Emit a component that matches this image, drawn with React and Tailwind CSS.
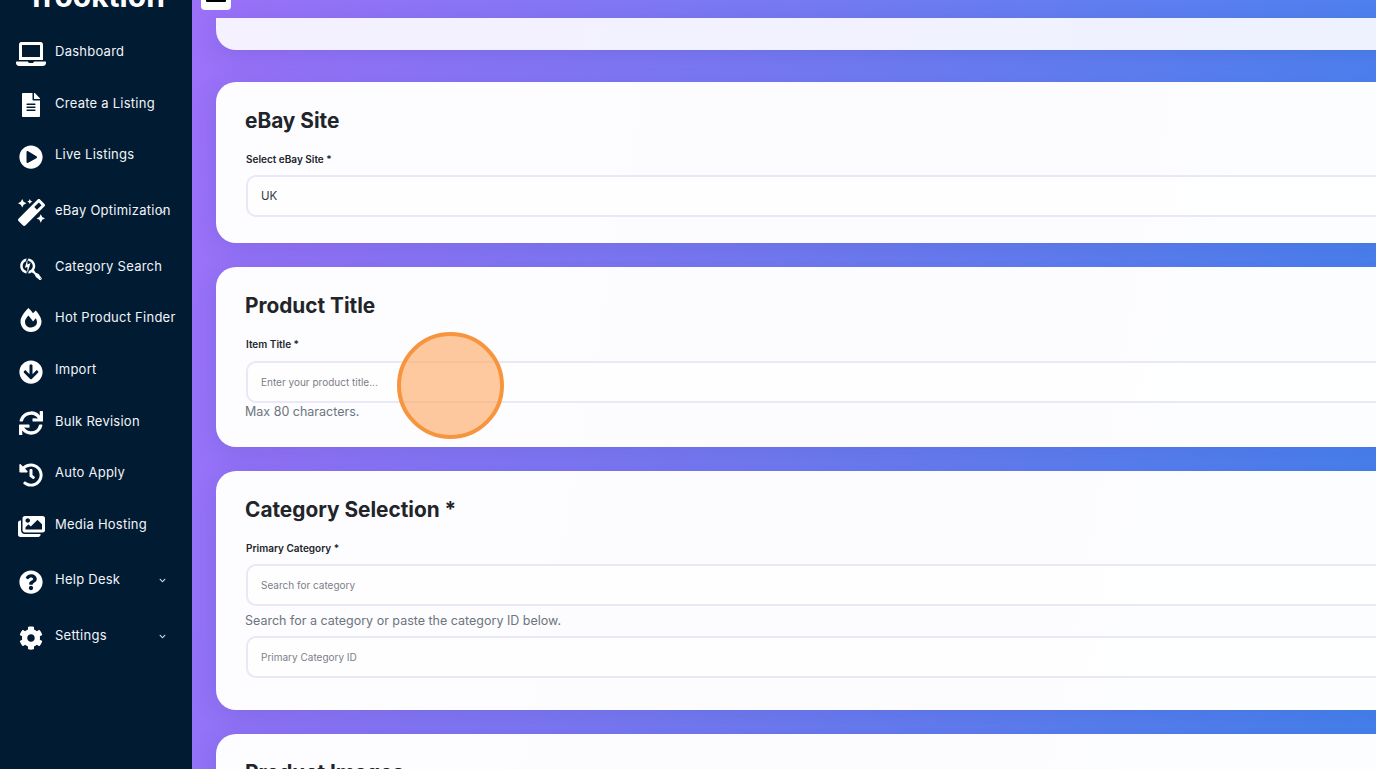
import React from "react";
import { FaLaptop, FaFileAlt, FaPlayCircle, FaMagic, FaSearchengin, FaFireAlt, FaArrowCircleDown, FaSync, FaHistory, FaImages, FaQuestionCircle, FaCog, FaChevronDown } from "react-icons/fa";

const items = [
  { label: "Dashboard", Icon: FaLaptop, h: "h-[51.6px]", size: "text-[30px]" },
  { label: "Create a Listing", Icon: FaFileAlt, h: "h-[51.6px]", size: "text-[24px]" },
  { label: "Live Listings", Icon: FaPlayCircle, h: "h-[51.6px]", size: "text-[24px]" },
  { label: "eBay Optimization", Icon: FaMagic, h: "h-[60px]", size: "text-[27px]", chevron: true },
  { label: "Category Search", Icon: FaSearchengin, h: "h-[51.6px]", size: "text-[24px]" },
  { label: "Hot Product Finder", Icon: FaFireAlt, h: "h-[51.6px]", size: "text-[24px]" },
  { label: "Import", Icon: FaArrowCircleDown, h: "h-[51.6px]", size: "text-[24px]" },
  { label: "Bulk Revision", Icon: FaSync, h: "h-[51.6px]", size: "text-[24px]" },
  { label: "Auto Apply", Icon: FaHistory, h: "h-[51.6px]", size: "text-[24px]" },
  { label: "Media Hosting", Icon: FaImages, h: "h-[51.6px]", size: "text-[27px]" },
  { label: "Help Desk", Icon: FaQuestionCircle, h: "h-[59px]", size: "text-[24px]", chevron: true },
  { label: "Settings", Icon: FaCog, h: "h-[53px]", size: "text-[24px]", chevron: true },
];

function NavItem({ label, Icon, h, size, chevron }) {
  return (
    <div className={`relative flex items-center pl-4 ${h}`}>
      <span className="flex w-[30px] justify-center text-white">
        <Icon className={size} />
      </span>
      <span className="ml-[9px] -translate-y-[2px] text-[13px] tracking-[0.25px] whitespace-nowrap text-[#f1f4f8]">{label}</span>
      {chevron && <FaChevronDown className="absolute left-[159px] top-1/2 -mt-[5px] text-[7px] text-[#d5dbe2]" />}
    </div>
  );
}

function Field({ label, value, placeholder, hint, labelGap = "mb-[8px]", hintClass = "mt-[0px]" }) {
  return (
    <div>
      {label && <div className={`${labelGap} h-[15px] text-[10px] leading-[15px] font-semibold text-[#212529]`}>{label}</div>}
      <input
        readOnly
        value={value || ""}
        placeholder={placeholder}
        className="block h-[42px] w-full rounded-[10px] border-2 border-[#e8e8f6] bg-white/70 pl-[13px] text-[11.5px] text-[#333a42] outline-none placeholder:text-[10px] placeholder:text-[#7b8087]"
      />
      {hint && <div className={`${hintClass} h-[17px] -ml-px text-[12.5px] leading-[17px] whitespace-nowrap text-[#6c757d]`}>{hint}</div>}
    </div>
  );
}

function Card({ title, className, children }) {
  return (
    <section className={`rounded-l-[20px] bg-white/[0.98] px-[30px] shadow-[0_4px_24px_rgba(40,50,130,0.16)] ${className}`}>
      <h2 className="-ml-px mb-[19px] h-[24px] text-[20.8px] leading-[24px] font-bold text-[#212529]">{title}</h2>
      {children}
    </section>
  );
}

export default function App() {
  return (
    <div className="flex h-[769px] w-[1376px] overflow-hidden font-['Inter','Noto_Sans',sans-serif]">
      <aside className="flex w-[192px] shrink-0 flex-col bg-[#011b33]">
        <div className="h-[28px] overflow-hidden">
          <div className="-mt-[16px] pl-[31px] text-[30px] leading-[24px] font-bold text-white">frooktion</div>
        </div>
        <nav className="flex flex-col">
          {items.map((it) => (
            <NavItem key={it.label} {...it} />
          ))}
        </nav>
      </aside>
      <main className="relative min-w-0 flex-1 overflow-hidden bg-[linear-gradient(100deg,#9c71f9_0%,#737bf3_50%,#4583ef_100%)]">
        <header className="h-[18px] pl-[9px]">
          <div className="flex h-[10px] w-[30px] justify-center rounded-b-[4px] bg-white">
            <div className="h-[2px] w-[20px] rounded-b-[1px] bg-black" />
          </div>
        </header>
        <div className="ml-6 flex w-[1300px] flex-col">
          <div className="mb-8 h-[32px] rounded-bl-[20px] bg-white/90 shadow-[0_4px_24px_rgba(40,50,130,0.16)]" />
          <div className="flex flex-col gap-6">
            <Card title="eBay Site" className="h-[161px] pt-[27px]">
              <Field label="Select eBay Site *" value="UK" />
            </Card>
            <Card title="Product Title" className="h-[180px] pt-[27px]">
              <Field label="Item Title *" labelGap="mb-[9px]" placeholder="Enter your product title..." hint="Max 80 characters." />
            </Card>
            <Card title="Category Selection *" className="h-[239px] pt-[27px]">
              <Field label="Primary Category *" placeholder="Search for category" hint="Search for a category or paste the category ID below." hintClass="mt-[6px] mb-[7px]" />
              <Field placeholder="Primary Category ID" />
            </Card>
            <Card title="Product Images" className="h-[200px] pt-[27px]" />
          </div>
        </div>
        <div className="absolute left-[205px] top-[332px] h-[107px] w-[107px] rounded-full border-4 border-[#f7953f] bg-[#ffa55f]/60" />
      </main>
    </div>
  );
}
